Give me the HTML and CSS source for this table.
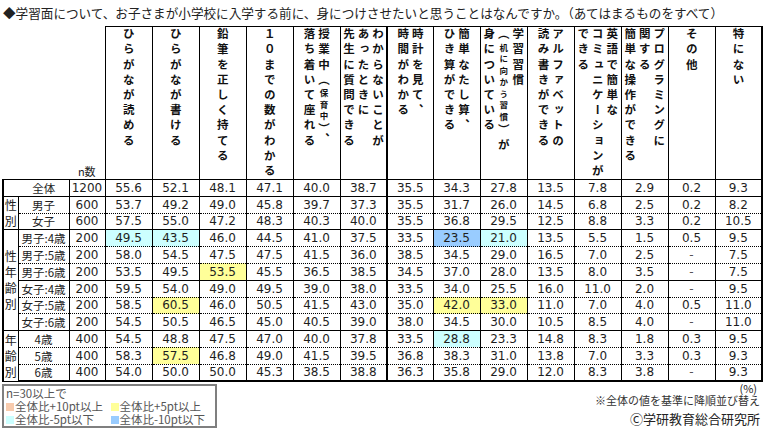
FILE: index.html
```html
<!DOCTYPE html>
<html lang="ja">
<head>
<meta charset="utf-8">
<title>学習面アンケート</title>
<link rel="stylesheet" href="styles.css">
</head>
<body>
<div class="page">
  <div class="title">◆学習面について、お子さまが小学校に入学する前に、身につけさせたいと思うことはなんですか。（あてはまるものをすべて）</div>
  <table class="tbl">
    <colgroup>
      <col class="c-grp"><col class="c-lbl"><col class="c-n">
      <col class="c-d"><col class="c-d"><col class="c-d"><col class="c-d"><col class="c-d"><col class="c-d">
      <col class="c-d7">
      <col class="c-d"><col class="c-d"><col class="c-d"><col class="c-d"><col class="c-d"><col class="c-d"><col class="c-d">
    </colgroup>
    <thead>
      <tr class="hrow">
        <th class="blank" colspan="2"></th>
        <th class="ncol">n数</th>
        <th class="h"><div class="hc"><div class="vt">ひらがなが読める</div></div></th>
        <th class="h"><div class="hc"><div class="vt">ひらがなが書ける</div></div></th>
        <th class="h"><div class="hc"><div class="vt">鉛筆を正しく持てる</div></div></th>
        <th class="h"><div class="hc"><div class="vt">１０までの数がわかる</div></div></th>
        <th class="h"><div class="hc"><div class="vt">授業中（<span class="sm">保育中</span>）、<br>落ち着いて座れる</div></div></th>
        <th class="h"><div class="hc"><div class="vt">わからないことが<br>あったときに<br>先生に質問できる</div></div></th>
        <th class="h thick"><div class="hc"><div class="vt">時計を見て、<br>時間がわかる</div></div></th>
        <th class="h"><div class="hc"><div class="vt">簡単なたし算、<br>ひき算ができる</div></div></th>
        <th class="h"><div class="hc"><div class="vt">学習習慣<br>（<span class="sm">机に向かう習慣</span>）が<br>身についている</div></div></th>
        <th class="h"><div class="hc"><div class="vt">アルファベットの<br>読み書きができる</div></div></th>
        <th class="h"><div class="hc"><div class="vt">英語で簡単な<br>コミュニケーションが<br>できる</div></div></th>
        <th class="h"><div class="hc"><div class="vt">プログラミングに<br>関する<br>簡単な操作ができる</div></div></th>
        <th class="h"><div class="hc"><div class="vt">その他</div></div></th>
        <th class="h last"><div class="hc"><div class="vt">特にない</div></div></th>
      </tr>
    </thead>
    <tbody>
      <tr class="top">
        <td class="lbl all first" colspan="2">全体</td><td>1200</td>
        <td>55.6</td><td>52.1</td><td>48.1</td><td>47.1</td><td>40.0</td><td>38.7</td>
        <td class="thick">35.5</td><td>34.3</td><td>27.8</td><td>13.5</td><td>7.8</td><td>2.9</td><td>0.2</td><td class="last">9.3</td>
      </tr>
      <tr class="top">
        <td class="grp first" rowspan="2">性<br>別</td>
        <td class="lbl">男子</td><td>600</td>
        <td>53.7</td><td>49.2</td><td>49.0</td><td>45.8</td><td>39.7</td><td>37.3</td>
        <td class="thick">35.5</td><td>31.7</td><td>26.0</td><td>14.5</td><td>6.8</td><td>2.5</td><td>0.2</td><td class="last">8.2</td>
      </tr>
      <tr class="sub">
        <td class="lbl">女子</td><td>600</td>
        <td>57.5</td><td>55.0</td><td>47.2</td><td>48.3</td><td>40.3</td><td>40.0</td>
        <td class="thick">35.5</td><td>36.8</td><td>29.5</td><td>12.5</td><td>8.8</td><td>3.3</td><td>0.2</td><td class="last">10.5</td>
      </tr>
      <tr class="top">
        <td class="grp first" rowspan="6">性<br>年<br>齢<br>別</td>
        <td class="lbl">男子:4歳</td><td>200</td>
        <td class="hl-c">49.5</td><td class="hl-c">43.5</td><td>46.0</td><td>44.5</td><td>41.0</td><td>37.5</td>
        <td class="thick">33.5</td><td class="hl-b">23.5</td><td class="hl-c">21.0</td><td>13.5</td><td>5.5</td><td>1.5</td><td>0.5</td><td class="last">9.5</td>
      </tr>
      <tr class="sub">
        <td class="lbl">男子:5歳</td><td>200</td>
        <td>58.0</td><td>54.5</td><td>47.5</td><td>47.5</td><td>41.5</td><td>36.0</td>
        <td class="thick">38.5</td><td>34.5</td><td>29.0</td><td>16.5</td><td>7.0</td><td>2.5</td><td class="dash">-</td><td class="last">7.5</td>
      </tr>
      <tr class="sub">
        <td class="lbl">男子:6歳</td><td>200</td>
        <td>53.5</td><td>49.5</td><td class="hl-y">53.5</td><td>45.5</td><td>36.5</td><td>38.5</td>
        <td class="thick">34.5</td><td>37.0</td><td>28.0</td><td>13.5</td><td>8.0</td><td>3.5</td><td class="dash">-</td><td class="last">7.5</td>
      </tr>
      <tr class="top">
        <td class="lbl">女子:4歳</td><td>200</td>
        <td>59.5</td><td>54.0</td><td>49.0</td><td>49.5</td><td>39.0</td><td>38.0</td>
        <td class="thick">33.5</td><td>34.0</td><td>25.5</td><td>16.0</td><td>11.0</td><td>2.0</td><td class="dash">-</td><td class="last">9.5</td>
      </tr>
      <tr class="sub">
        <td class="lbl">女子:5歳</td><td>200</td>
        <td>58.5</td><td class="hl-y">60.5</td><td>46.0</td><td>50.5</td><td>41.5</td><td>43.0</td>
        <td class="thick">35.0</td><td class="hl-y">42.0</td><td class="hl-y">33.0</td><td>11.0</td><td>7.0</td><td>4.0</td><td>0.5</td><td class="last">11.0</td>
      </tr>
      <tr class="sub">
        <td class="lbl">女子:6歳</td><td>200</td>
        <td>54.5</td><td>50.5</td><td>46.5</td><td>45.0</td><td>40.5</td><td>39.0</td>
        <td class="thick">38.0</td><td>34.5</td><td>30.0</td><td>10.5</td><td>8.5</td><td>4.0</td><td class="dash">-</td><td class="last">11.0</td>
      </tr>
      <tr class="top">
        <td class="grp first" rowspan="3">年<br>齢<br>別</td>
        <td class="lbl">4歳</td><td>400</td>
        <td>54.5</td><td>48.8</td><td>47.5</td><td>47.0</td><td>40.0</td><td>37.8</td>
        <td class="thick">33.5</td><td class="hl-c">28.8</td><td>23.3</td><td>14.8</td><td>8.3</td><td>1.8</td><td>0.3</td><td class="last">9.5</td>
      </tr>
      <tr class="sub">
        <td class="lbl">5歳</td><td>400</td>
        <td>58.3</td><td class="hl-y">57.5</td><td>46.8</td><td>49.0</td><td>41.5</td><td>39.5</td>
        <td class="thick">36.8</td><td>38.3</td><td>31.0</td><td>13.8</td><td>7.0</td><td>3.3</td><td>0.3</td><td class="last">9.3</td>
      </tr>
      <tr class="sub end">
        <td class="lbl">6歳</td><td>400</td>
        <td>54.0</td><td>50.0</td><td>50.0</td><td>45.3</td><td>38.5</td><td>38.8</td>
        <td class="thick">36.3</td><td>35.8</td><td>29.0</td><td>12.0</td><td>8.3</td><td>3.8</td><td class="dash">-</td><td class="last">9.3</td>
      </tr>
    </tbody>
  </table>
  <div class="foot">
    <div class="legend">
      <div class="lg-row">n=30以上で</div>
      <div class="lg-row">
        <span class="lg-item"><span class="sw sw-o"></span>全体比+10pt以上</span>
        <span class="lg-item"><span class="sw sw-y"></span>全体比+5pt以上</span>
      </div>
      <div class="lg-row">
        <span class="lg-item"><span class="sw sw-c"></span>全体比-5pt以下</span>
        <span class="lg-item"><span class="sw sw-b"></span>全体比-10pt以下</span>
      </div>
    </div>
    <div class="notes">
      <div class="pct">(%)</div>
      <div class="note">※全体の値を基準に降順並び替え</div>
      <div class="copy">Ⓒ学研教育総合研究所</div>
    </div>
  </div>
</div>
</body>
</html>
```

FILE: styles.css
```css
* { box-sizing: border-box; }
html, body { margin: 0; padding: 0; background: #fff; }
body {
  font-family: "Noto Sans CJK JP", sans-serif;
  color: #222;
  width: 766px;
  height: 432px;
  overflow: hidden;
}
.page { padding-left: 2px; }
.title {
  height: 26px;
  line-height: 26px;
  font-size: 12.6px;
  padding-left: 1px;
  white-space: nowrap;
}
.tbl {
  border-collapse: collapse;
  table-layout: fixed;
  width: 759px;
}
.c-grp { width: 15px; }
.c-lbl { width: 51px; }
.c-n { width: 36px; }
.c-d { width: 47px; }
.c-d7 { width: 46px; }

.hrow th { padding: 0; font-weight: normal; }
.hrow .blank { border-bottom: 1px solid #000; }
.hrow .ncol {
  vertical-align: bottom;
  text-align: center;
  font-size: 11px;
  line-height: 14px;
  padding-bottom: 1px;
  border-bottom: 1px solid #000;
}
.hrow .h { border: 1px solid #000; vertical-align: top; }
.hrow .h.thick { border-left: 2px solid #000; }
.hrow .h.last { border-right: 2px solid #000; }
.hc {
  height: 152px;
  display: flex;
  justify-content: center;
  padding-top: 1px;
}
.vt {
  writing-mode: vertical-rl;
  white-space: nowrap;
  text-align: left;
  height: 150px;
  font-size: 11.5px;
  line-height: 14.5px;
  letter-spacing: 3.7px;
  font-weight: bold;
  color: #111;
}
.vt .sm { font-size: 8.5px; letter-spacing: 3px; }

.tbl tbody tr { height: 16.8px; }
.tbl td {
  padding: 0;
  text-align: center;
  border-left: 1px solid #000;
  font-family: "DejaVu Sans", sans-serif;
  font-size: 12px;
  line-height: 14px;
  white-space: nowrap;
  color: #1e1e1e;
}
.tbl tr.top td { border-top: 1px solid #000; }
.tbl tr.sub td { border-top: 1px dotted #000; }
.tbl tr.end td { border-bottom: 2px solid #000; }
.tbl td.first { border-left: 2px solid #000; }
.tbl td.thick { border-left: 2px solid #000; }
.tbl td.last { border-right: 2px solid #000; }
.tbl td.lbl {
  font-family: "Noto Sans CJK JP", sans-serif;
  font-size: 11.5px;
}
.tbl td.all { padding-left: 15px; }
.tbl td.grp {
  font-family: "Noto Sans CJK JP", sans-serif;
  font-size: 12px;
  line-height: 16px;
  border-top: 1px solid #000;
  border-bottom: 1px solid #000;
}
.tbl td.dash { color: #555; }
.hl-c { background: #ccffff; }
.hl-b { background: #99ccff; }
.hl-y { background: #ffff99; }

.foot {
  display: flex;
  justify-content: space-between;
  align-items: flex-start;
}
.legend {
  margin-top: 2px;
  width: 215px;
  height: 44px;
  border: 2px solid #7f7f7f;
  padding: 1px 0 0 2px;
  font-size: 11.5px;
  line-height: 13px;
  color: #555;
}
.lg-row { display: flex; white-space: nowrap; height: 13px; }
.lg-item { display: flex; align-items: center; width: 107px; }
.sw { width: 8px; height: 8px; margin-right: 1px; flex: none; }
.sw-o { background: #f8cbad; }
.sw-y { background: #ffff99; }
.sw-c { background: #ccffff; }
.sw-b { background: #99ccff; }
.notes {
  text-align: right;
  padding-right: 6px;
  white-space: nowrap;
}
.pct { font-size: 11px; line-height: 12px; padding-right: 3px; }
.note { font-size: 11px; line-height: 13px; color: #333; }
.copy { font-size: 13px; line-height: 17px; margin-top: 3px; color: #222; }
```
